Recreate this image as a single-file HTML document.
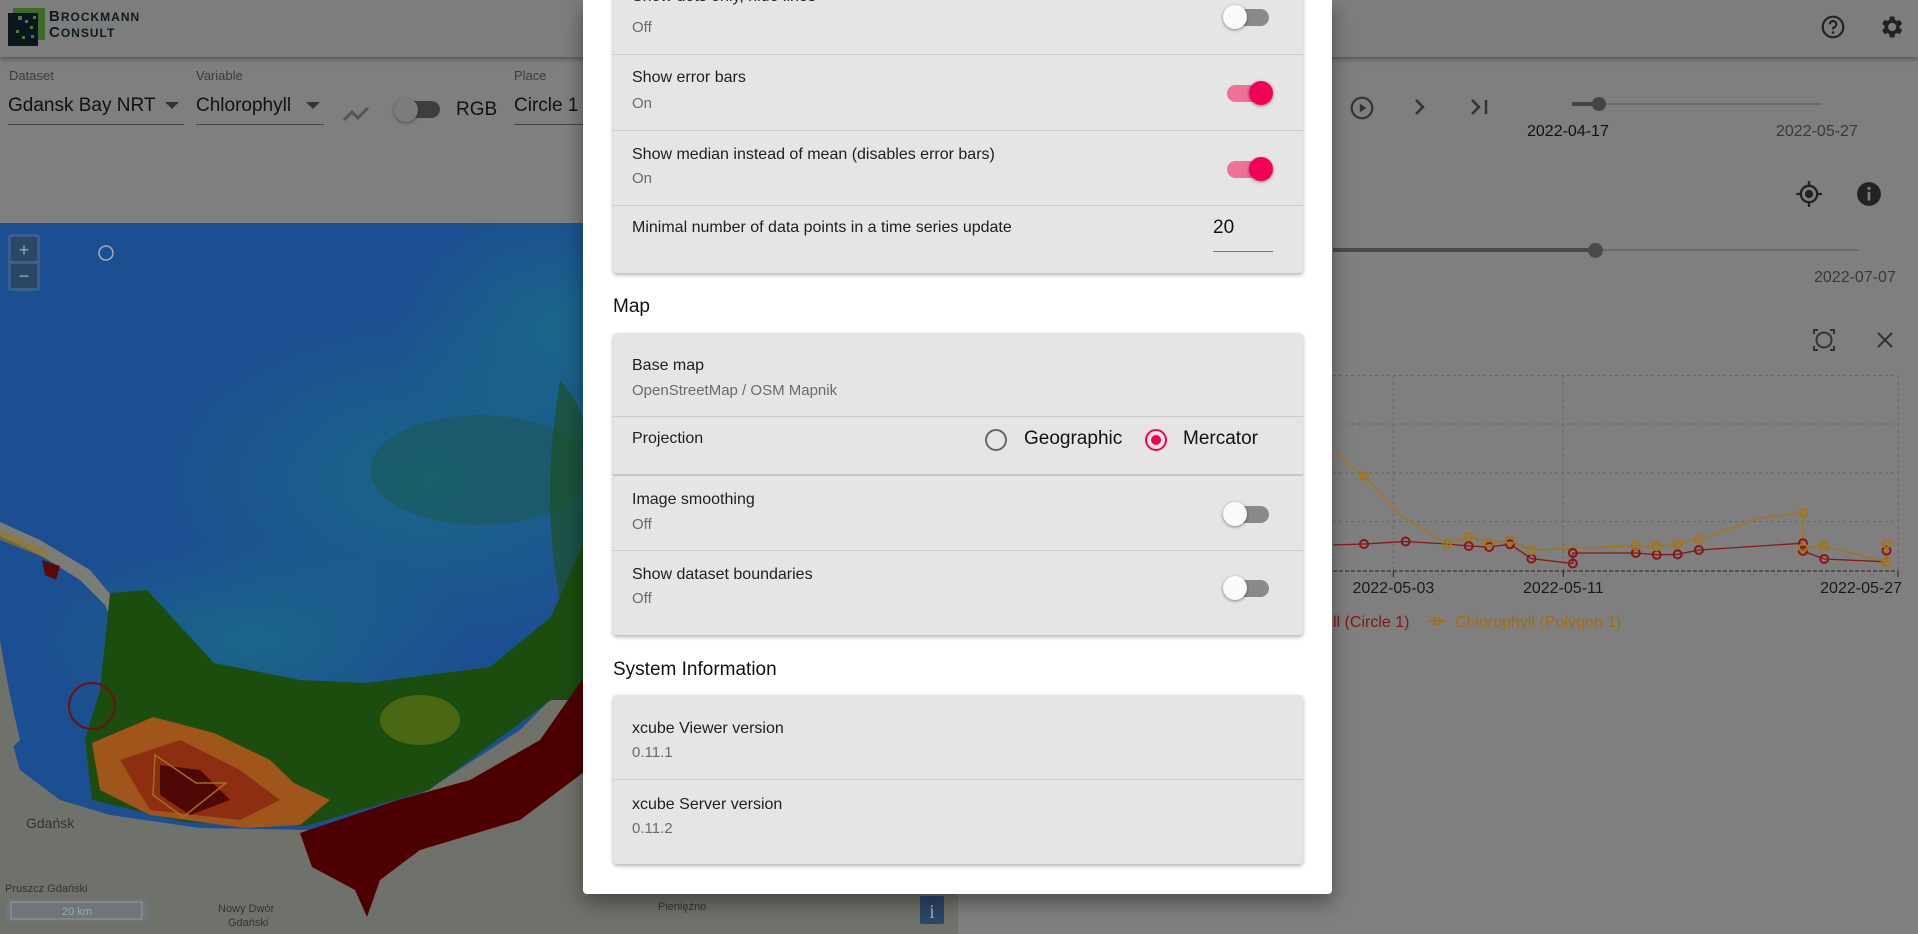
<!DOCTYPE html>
<html><head><meta charset="utf-8">
<style>
*{margin:0;padding:0;box-sizing:border-box}
body{width:1918px;height:934px;overflow:hidden;background:#7f7f7f;font-family:"Liberation Sans",sans-serif;position:relative}
.a{position:absolute;white-space:nowrap}
.lbl{font-size:13px;color:#3c3c3c}
.val{font-size:19px;color:#111}
.card{position:absolute;left:613px;width:690px;background:#e5e5e5;border-radius:4px;box-shadow:0 2px 4px rgba(0,0,0,.3)}
.div{position:absolute;left:0;right:0;height:1px;background:#cbcbcb}
.t1{position:absolute;left:19px;font-size:16px;color:#1e1e1e;line-height:20px}
.t2{position:absolute;left:19px;font-size:15px;color:#6a6a6a;line-height:20px}
.tg{position:absolute;left:612px;width:46px;height:18px}
.tg .tr{position:absolute;left:2px;top:2px;width:42px;height:17px;border-radius:9px;background:#8a8a8a}
.tg .th{position:absolute;left:-2px;top:-2px;width:24px;height:24px;border-radius:50%;background:#fafafa;box-shadow:0 1px 3px rgba(0,0,0,.45)}
.tg.on .tr{background:#f07098}
.tg.on .th{left:24px;background:#f50057}
.h{position:absolute;left:613px;font-size:19px;color:#111}
</style></head><body>
<div class="a" style="left:0;top:0;width:1918px;height:57px;background:#7d7d7d;box-shadow:0 2px 5px rgba(0,0,0,.35)"></div>
<svg class="a" style="left:8px;top:8px" width="40" height="40" viewBox="0 0 40 40">
<rect x="5" y="0" width="32" height="32" fill="#3f6a2a"/><rect x="0" y="5" width="30" height="33" fill="#0b1620"/>
<g fill="#4f7a3a"><rect x="10" y="8" width="4" height="4"/><rect x="17" y="12" width="3" height="3"/><rect x="22" y="18" width="3" height="3"/><rect x="8" y="22" width="3" height="3"/><rect x="14" y="28" width="3" height="3"/><rect x="23" y="27" width="3" height="3"/><rect x="25" y="8" width="3" height="3"/></g></svg>
<div class="a" style="left:49px;top:9px;font-size:15px;line-height:15px;color:#0e1a22;letter-spacing:1px;font-weight:bold">B<span style="font-size:12px">ROCKMANN</span><br>C<span style="font-size:12px">ONSULT</span></div>
<svg class="a" style="left:1820px;top:14px" width="26" height="26" viewBox="0 0 24 24"><circle cx="12" cy="12" r="9.5" fill="none" stroke="#222" stroke-width="2"/><path d="M9 9.5a3 3 0 1 1 4 2.8c-.8.4-1 1-1 2" fill="none" stroke="#222" stroke-width="2"/><circle cx="12" cy="17" r="1.2" fill="#222"/></svg>
<svg class="a" style="left:1877px;top:13px" width="28" height="28" viewBox="0 0 24 24"><path fill="#222" d="M19.4 13a7.5 7.5 0 0 0 0-2l2.1-1.6-2-3.5-2.5 1a7 7 0 0 0-1.7-1L15 3h-4l-.4 2.9a7 7 0 0 0-1.7 1l-2.5-1-2 3.5L6.5 11a7.5 7.5 0 0 0 0 2l-2.1 1.6 2 3.5 2.5-1a7 7 0 0 0 1.7 1L11 21h4l.4-2.9a7 7 0 0 0 1.7-1l2.5 1 2-3.5zM13 15.5A3.5 3.5 0 1 1 13 8.5a3.5 3.5 0 0 1 0 7z"/></svg>

<div class="a lbl" style="left:9px;top:68px">Dataset</div>
<div class="a val" style="left:8px;top:95px">Gdansk Bay NRT</div>
<svg class="a" style="left:165px;top:102px" width="14" height="8"><path d="M0 0h14L7 7z" fill="#333"/></svg>
<div class="a" style="left:8px;top:124px;width:176px;height:1px;background:#444"></div>
<div class="a lbl" style="left:196px;top:68px">Variable</div>
<div class="a val" style="left:196px;top:95px">Chlorophyll</div>
<svg class="a" style="left:306px;top:102px" width="14" height="8"><path d="M0 0h14L7 7z" fill="#333"/></svg>
<div class="a" style="left:196px;top:124px;width:128px;height:1px;background:#444"></div>
<svg class="a" style="left:342px;top:104px" width="30" height="18"><path d="M2 16l8-8 6 6 10-10" fill="none" stroke="#555" stroke-width="3"/></svg>
<div class="a" style="left:398px;top:101px;width:42px;height:17px;border-radius:9px;background:#3e3e3e"></div>
<div class="a" style="left:394px;top:98px;width:24px;height:24px;border-radius:50%;background:#7c7c7c;box-shadow:0 1px 3px rgba(0,0,0,.4)"></div>
<div class="a val" style="left:456px;top:99px">RGB</div>
<div class="a lbl" style="left:514px;top:68px">Place</div>
<div class="a val" style="left:514px;top:95px">Circle 1</div>
<div class="a" style="left:514px;top:124px;width:70px;height:1px;background:#444"></div>

<svg class="a" style="left:1349px;top:95px" width="26" height="26" viewBox="0 0 24 24"><circle cx="12" cy="12" r="9.5" fill="none" stroke="#333" stroke-width="2"/><path d="M10 8v8l6-4z" fill="#333"/></svg>
<svg class="a" style="left:1413px;top:98px" width="14" height="18"><path d="M3 2l7 7-7 7" fill="none" stroke="#333" stroke-width="2.5"/></svg>
<svg class="a" style="left:1470px;top:98px" width="22" height="18"><path d="M2 2l7 7-7 7" fill="none" stroke="#333" stroke-width="2.5"/><path d="M16 2v14" stroke="#333" stroke-width="2.5"/></svg>
<div class="a" style="left:1572px;top:103px;width:250px;height:2px;background:#6b6b6b"></div>
<div class="a" style="left:1572px;top:102px;width:27px;height:4px;background:#444"></div>
<div class="a" style="left:1592px;top:97px;width:14px;height:14px;border-radius:50%;background:#444"></div>
<div class="a" style="left:1527px;top:123px;font-size:16px;color:#111">2022-04-17</div>
<div class="a" style="left:1776px;top:123px;font-size:16px;color:#3a3a3a">2022-05-27</div>
<svg class="a" style="left:1795px;top:180px" width="28" height="28" viewBox="0 0 24 24"><circle cx="12" cy="12" r="7" fill="none" stroke="#222" stroke-width="2"/><circle cx="12" cy="12" r="3.5" fill="#222"/><path d="M12 1v4M12 19v4M1 12h4M19 12h4" stroke="#222" stroke-width="2"/></svg>
<svg class="a" style="left:1856px;top:181px" width="26" height="26" viewBox="0 0 24 24"><circle cx="12" cy="12" r="11" fill="#222"/><rect x="10.8" y="10" width="2.4" height="8" fill="#7f7f7f"/><circle cx="12" cy="6.8" r="1.5" fill="#7f7f7f"/></svg>
<div class="a" style="left:1333px;top:249px;width:526px;height:2px;background:#6b6b6b"></div>
<div class="a" style="left:1333px;top:248px;width:262px;height:4px;background:#4a4a4a"></div>
<div class="a" style="left:1588px;top:243px;width:15px;height:15px;border-radius:50%;background:#4a4a4a"></div>
<div class="a" style="left:1814px;top:269px;font-size:16px;color:#3a3a3a">2022-07-07</div>
<svg class="a" style="left:1813px;top:329px" width="22" height="22" viewBox="0 0 22 22"><circle cx="11" cy="11" r="7.5" fill="none" stroke="#333" stroke-width="2"/><path d="M1 5V1h4M17 1h4v4M21 17v4h-4M5 21H1v-4" fill="none" stroke="#333" stroke-width="2"/></svg>
<svg class="a" style="left:1876px;top:331px" width="18" height="18"><path d="M2 2l14 14M16 2L2 16" stroke="#333" stroke-width="2"/></svg>

<svg class="a" style="left:1333px;top:370px" width="585" height="260" viewBox="1333 370 585 260">
<g stroke="#666" stroke-dasharray="3 3" stroke-width="1" fill="none">
<path d="M1333 375.5H1898M1333 424H1898M1333 473H1898M1333 521.6H1898M1393.4 375.5V571M1563.3 375.5V571M1898 375.5V571"/></g>
<path d="M1333 571H1898" stroke="#222" stroke-dasharray="4 2"/>
<path d="M1393.4 571v6M1563.3 571v6M1898 571v6" stroke="#222"/>
<polyline fill="none" stroke="#8a1515" stroke-width="1.3" points="1333,545 1364,544 1405.6,541.5 1447,544 1468.7,546 1489.2,547 1510,544.2 1531.4,558.6 1572.8,563.5 1572.8,553 1635.8,553 1656.7,554.8 1677.6,554.4 1698.9,550 1803,543.2 1803,551 1824.2,559 1886.5,561.8 1886.5,550.6"/>
<polyline fill="none" stroke="#a87410" stroke-width="1.3" points="1333.5,452 1364,475.8 1400,515 1447,544 1468.7,536.5 1489,543.2 1510,540.7 1531.4,550.2 1635.8,545.6 1656.7,546.4 1677.6,544 1699,539.4 1760,518 1803,513 1803,547.7 1824,546 1886.5,562 1886.5,543.6"/>
<g fill="none" stroke="#8a1515" stroke-width="2"><circle cx="1364" cy="544" r="4"/><circle cx="1405.6" cy="541.5" r="4"/><circle cx="1468.7" cy="546" r="4"/><circle cx="1489.2" cy="547" r="4"/><circle cx="1510" cy="544.2" r="4"/><circle cx="1531.4" cy="558.6" r="4"/><circle cx="1572.8" cy="563.5" r="4"/><circle cx="1572.8" cy="553" r="4"/><circle cx="1635.8" cy="553" r="4"/><circle cx="1656.7" cy="554.8" r="4"/><circle cx="1677.6" cy="554.4" r="4"/><circle cx="1698.9" cy="550" r="4"/><circle cx="1803" cy="543.2" r="4"/><circle cx="1803" cy="551" r="4"/><circle cx="1824.2" cy="559" r="4"/><circle cx="1886.5" cy="550.6" r="4"/></g>
<g fill="none" stroke="#a87410" stroke-width="2"><circle cx="1364" cy="475.8" r="4"/><circle cx="1447" cy="544" r="4"/><circle cx="1468.7" cy="536.5" r="4"/><circle cx="1489" cy="543.2" r="4"/><circle cx="1510" cy="540.7" r="4"/><circle cx="1531.4" cy="550.2" r="4"/><circle cx="1635.8" cy="545.6" r="4"/><circle cx="1656.7" cy="546.4" r="4"/><circle cx="1677.6" cy="544" r="4"/><circle cx="1699" cy="539.4" r="4"/><circle cx="1803" cy="513" r="4"/><circle cx="1803" cy="547.7" r="4"/><circle cx="1824" cy="546" r="4"/><circle cx="1886.5" cy="562" r="4"/><circle cx="1886.5" cy="543.6" r="4"/></g>
<g font-family="Liberation Sans" font-size="16" fill="#1a1a1a"><text x="1393.4" y="593" text-anchor="middle">2022-05-03</text><text x="1563.3" y="593" text-anchor="middle">2022-05-11</text><text x="1902" y="593" text-anchor="end">2022-05-27</text></g>
<g font-family="Liberation Sans" font-size="16"><text x="1333" y="627" fill="#7a1a1a">ll (Circle 1)</text><path d="M1429 621h16" stroke="#a06e10" stroke-width="1.5"/><circle cx="1437" cy="621" r="3.5" fill="none" stroke="#a06e10" stroke-width="1.5"/><text x="1455" y="627" fill="#a06e10">Chlorophyll (Polygon 1)</text></g>
</svg>

<svg class="a" style="left:0;top:223px" width="958" height="711" viewBox="0 223 958 711">
<defs>
<radialGradient id="tl" cx="0.5" cy="0.5" r="0.5"><stop offset="0" stop-color="#1a6c86" stop-opacity=".8"/><stop offset="1" stop-color="#1a6c86" stop-opacity="0"/></radialGradient>
</defs>
<rect x="0" y="223" width="958" height="711" fill="#1c4f92"/>
<ellipse cx="430" cy="480" rx="280" ry="170" fill="url(#tl)"/>
<ellipse cx="250" cy="640" rx="220" ry="100" fill="url(#tl)"/>
<ellipse cx="560" cy="330" rx="170" ry="130" fill="url(#tl)"/>
<ellipse cx="480" cy="470" rx="110" ry="55" fill="#1d5232" opacity=".35"/>
<path d="M560 380 Q600 420 600 560 L560 600 Q540 500 560 380Z" fill="#1d4f18" opacity=".6"/>
<path d="M0 700 L20 770 L60 800 L110 815 L200 828 L310 830 L420 795 L520 730 L600 650 L700 560 L958 500 L958 934 L0 934Z" fill="#6f726a"/>
<path d="M0 640 Q8 690 20 740 L0 760Z" fill="#6f726a"/>
<path d="M0 522 L40 540 L90 570 L115 600 L128 636 L120 640 L105 605 L80 580 L40 555 L0 536Z" fill="#7c7c76"/>
<path d="M0 530 L50 552 L45 558 L0 540Z" fill="#9a7a18" opacity=".6"/>
<path d="M42 560 L60 566 L56 580 L45 575Z" fill="#5a0a0a"/>
<path d="M110 593 L147 590 L214 663 L300 680 L367 683 L490 667 L551 617 L582 547 L600 540 L600 700 L551 700 L429 790 L306 826 L184 822 L92 800 L85 740 L100 690Z" fill="#1b4d0e"/>
<ellipse cx="420" cy="720" rx="40" ry="25" fill="#6a7a18" opacity=".6"/>
<path d="M92 743 L153 717 L214 733 L270 760 L294 783 L330 800 L300 825 L245 828 L150 815 L100 790Z" fill="#a0561a"/>
<path d="M120 760 L180 740 L240 770 L280 800 L240 820 L150 810Z" fill="#8e2e10"/>
<path d="M160 765 L200 770 L230 800 L190 815 L160 795Z" fill="#4e0806"/>
<polygon points="155,755 196,783 226,783 183,817 153,795" fill="none" stroke="#a07020" stroke-width="1.5"/>
<path d="M300 833 L398 800 L470 780 L540 740 L582 680 L600 650 L600 760 L520 820 L420 850 L380 880 L367 917 L355 890 L312 867Z" fill="#4e0000"/>
<circle cx="92" cy="706" r="23" fill="none" stroke="#701010" stroke-width="2"/>
<g font-family="Liberation Sans" font-size="14" fill="#333"><text x="26" y="828">Gdańsk</text><text x="5" y="892" font-size="11">Pruszcz Gdański</text><text x="218" y="912" font-size="11">Nowy Dwór</text><text x="228" y="926" font-size="11">Gdański</text><text x="658" y="910" font-size="11">Pieniężno</text></g>
<rect x="8" y="234" width="32" height="57" rx="3" fill="#4d6a8a" opacity=".6"/>
<rect x="11" y="237" width="26" height="24" rx="2" fill="#2b4666"/>
<rect x="11" y="264" width="26" height="24" rx="2" fill="#2b4666"/>
<text x="24" y="256" font-family="Liberation Sans" font-size="18" fill="#9aa" text-anchor="middle">+</text>
<text x="24" y="282" font-family="Liberation Sans" font-size="18" fill="#9aa" text-anchor="middle">−</text>
<circle cx="106" cy="253" r="7" fill="none" stroke="#aaa" stroke-width="1.5"/>
<rect x="6" y="899" width="141" height="23" rx="3" fill="#6e7680" opacity=".8"/>
<rect x="11" y="902" width="131" height="17" fill="none" stroke="#999"/>
<text x="77" y="915" font-family="Liberation Sans" font-size="11" fill="#9aa" text-anchor="middle">20 km</text>
<rect x="920" y="896" width="24" height="28" rx="2" fill="#2b4666"/>
<text x="932" y="918" font-family="Liberation Serif" font-size="20" fill="#9aa" text-anchor="middle">i</text>
</svg>

<div class="a" style="left:583px;top:0;width:749px;height:894px;background:#fff;border-radius:0 0 4px 4px;box-shadow:0 8px 20px rgba(0,0,0,.4)"></div>

<div class="card" style="top:-10px;height:283px">
 <div class="t1" style="top:-3px">Show dots only, hide lines</div>
 <div class="t2" style="top:28px">Off</div>
 <div class="tg" style="top:17px"><div class="tr"></div><div class="th"></div></div>
 <div class="div" style="top:64px"></div>
 <div class="t1" style="top:78px">Show error bars</div>
 <div class="t2" style="top:104px">On</div>
 <div class="tg on" style="top:93px"><div class="tr"></div><div class="th"></div></div>
 <div class="div" style="top:140px"></div>
 <div class="t1" style="top:155px">Show median instead of mean (disables error bars)</div>
 <div class="t2" style="top:179px">On</div>
 <div class="tg on" style="top:169px"><div class="tr"></div><div class="th"></div></div>
 <div class="div" style="top:215px"></div>
 <div class="t1" style="top:228px">Minimal number of data points in a time series update</div>
 <div class="a" style="left:600px;top:227px;font-size:19px;color:#111">20</div>
 <div class="a" style="left:600px;top:261px;width:60px;height:1px;background:#777"></div>
</div>
<div class="h" style="top:296px">Map</div>
<div class="card" style="top:333px;height:302px">
 <div class="t1" style="top:23px">Base map</div>
 <div class="t2" style="top:48px">OpenStreetMap / OSM Mapnik</div>
 <div class="div" style="top:83px"></div>
 <div class="t1" style="top:96px">Projection</div>
 <div class="a" style="left:372px;top:96px;width:22px;height:22px;border-radius:50%;border:2px solid #666"></div>
 <div class="a" style="left:411px;top:95px;font-size:19px;color:#111">Geographic</div>
 <div class="a" style="left:532px;top:96px;width:22px;height:22px;border-radius:50%;border:2px solid #f50057"></div>
 <div class="a" style="left:538px;top:102px;width:10px;height:10px;border-radius:50%;background:#f50057"></div>
 <div class="a" style="left:570px;top:95px;font-size:19px;color:#111">Mercator</div>
 <div class="div" style="top:141px;height:2px;background:#c6c6c6"></div>
 <div class="t1" style="top:157px">Image smoothing</div>
 <div class="t2" style="top:182px">Off</div>
 <div class="tg" style="top:171px"><div class="tr"></div><div class="th"></div></div>
 <div class="div" style="top:217px"></div>
 <div class="t1" style="top:232px">Show dataset boundaries</div>
 <div class="t2" style="top:256px">Off</div>
 <div class="tg" style="top:245px"><div class="tr"></div><div class="th"></div></div>
</div>
<div class="h" style="top:659px">System Information</div>
<div class="card" style="top:695px;height:169px">
 <div class="t1" style="top:24px">xcube Viewer version</div>
 <div class="t2" style="top:48px">0.11.1</div>
 <div class="div" style="top:84px"></div>
 <div class="t1" style="top:100px">xcube Server version</div>
 <div class="t2" style="top:124px">0.11.2</div>
</div>
</body></html>
